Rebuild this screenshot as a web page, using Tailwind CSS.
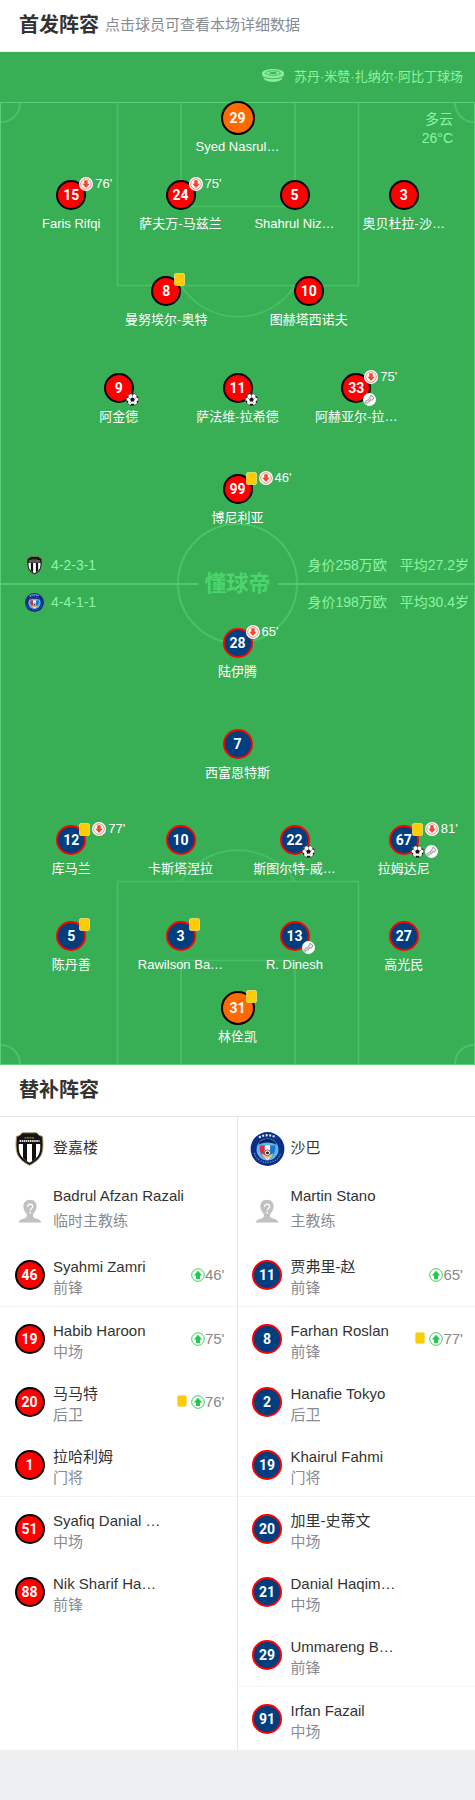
<!DOCTYPE html>
<html lang="zh-CN">

<head>
    <meta charset="UTF-8">
    <meta name="viewport" content="width=device-width, initial-scale=1.0">
    <title>首发阵容</title>
    <script src="https://cdn.jsdelivr.net/npm/@tailwindcss/browser@4"></script>
</head>

<body class="min-h-screen bg-[#eeeff1] text-[#333333] font-['Liberation_Sans','Noto_Sans_CJK_SC',sans-serif]">

    <!-- Shared icons -->
    <svg class="hidden">
        <symbol id="icon-off" viewBox="0 0 14 14">
            <circle cx="7" cy="7" r="7" fill="#fff" />
            <circle cx="7" cy="7" r="5.3" fill="none" stroke="#f2705c" stroke-width=".8" />
            <path d="M5.300 3.200h3.400v3.500h2L7 11 3.300 6.700h2z" fill="#f9452d" />
        </symbol>
        <symbol id="icon-on" viewBox="0 0 14 14">
            <circle cx="7" cy="7" r="6.300" fill="#fff" stroke="#2cc552" stroke-width=".9" />
            <path d="M5 10.900h4V7.400h2.200L7 2.800 2.800 7.400H5z" fill="#1fcb49" />
        </symbol>
        <symbol id="icon-card" viewBox="0 0 11 13">
            <rect x=".5" y=".5" width="10" height="12" rx="1.500" fill="#ffcc00" stroke="#f3dc78" stroke-width=".8" />
        </symbol>
        <symbol id="icon-goal" viewBox="0 0 13 13">
            <circle cx="6.500" cy="6.500" r="6.100" fill="#fff" stroke="#444" stroke-width=".6" />
            <path d="M6.500 4.200l2.300 1.700-.9 2.700H5.100l-.9-2.700z" fill="#111" />
            <path d="M4.500.8L6.500 2l2-1.200A6 6 0 0 0 4.500.8zM.5 5.300l1.900-.9.3-2.200A6 6 0 0 0 .5 5.300zM12.500 5.300l-1.900-.9-.3-2.200a6 6 0 0 1 2.200 3.100zM2 10.400l.3-2.300-1.700-.7A6 6 0 0 0 2 10.400zM11 10.400l-.3-2.300 1.700-.7a6 6 0 0 1-1.400 3zM4.500 12.200l.7-1.500h2.600l.7 1.500a6 6 0 0 1-4 0z" fill="#111" />
            <path d="M6.500 4.200V2M4.200 5.900L2.400 4.400M8.800 5.900l1.800-1.500M5.100 8.600l-.9 1.200M7.900 8.600l.9 1.200" stroke="#555" stroke-width=".5" />
        </symbol>
        <symbol id="icon-assist" viewBox="0 0 13 13">
            <circle cx="6.500" cy="6.500" r="6.500" fill="#fff" />
            <path d="M8 2.200l2.800 2.100-.6 2-2.400 1-3.300 2.500-2.100.5-.6-.9.800-1.300 3-1.500 1.300-2.200z" fill="#e6e6e6" stroke="#777" stroke-width=".7" stroke-linejoin="round" />
            <path d="M6.300 5.300l1.500 1.600M5 6.800l1.300 1.300M3.200 11.200l1-.9M6 9.700l.8-.5M9.500 7.700l.6-.5" stroke="#888" stroke-width=".6" fill="none" />
        </symbol>
        <symbol id="icon-coach" viewBox="0 0 24 24">
            <path d="M12 .8c4.200 0 6.600 2.800 6.600 6.600 0 3.300-1.700 5.600-3.400 7.600-.4 2.600 0 3.700 2.400 4.400 3 .8 5.200 1.400 5.900 4.100H.5c.7-2.700 2.900-3.300 5.900-4.100 2.400-.7 2.800-1.800 2.400-4.400-1.700-2-3.400-4.300-3.400-7.600C5.400 3.600 7.800.8 12 .8z" fill="#c1c1c1" />
            <path d="M9.600 7.900c0-1.800 1-2.700 2.500-2.700s2.500.9 2.500 2.300c0 1.900-2.400 1.900-2.400 4" fill="none" stroke="#fff" stroke-width="1.300" />
            <circle cx="12.200" cy="13.700" r=".9" fill="#fff" />
        </symbol>
        <symbol id="icon-stadium" viewBox="0 0 22 13">
            <path d="M0 4.200C0 1.900 4.900.1 11 .1s11 1.800 11 4.100v1.600c0 2-4.500 3.700-11 3.700S0 7.800 0 5.800z" fill="#8ceb9e" />
            <ellipse cx="11" cy="4" rx="7.300" ry="2.300" fill="none" stroke="#38ae55" stroke-width=".7" />
            <ellipse cx="11" cy="4" rx="3.600" ry=".9" fill="#38ae55" />
            <path d="M7 1.200l1.300 1.200M15 1.200l-1.300 1.200M2.500 4.600h2M17.500 4.600h2M7.500 7l1-1.200M14.500 7l-1-1.200" stroke="#38ae55" stroke-width=".6" />
            <path d="M.9 7.700c4.300 3 15.900 3 20.200 0l-1.300 2.600c-3.600 3.500-14 3.500-17.600 0z" fill="#8ceb9e" />
            <path d="M.7 7.400c4.600 3.200 16 3.200 20.600 0" fill="none" stroke="#38ae55" stroke-width=".6" />
        </symbol>
        <symbol id="crest-home" viewBox="0 0 28 34">
            <path d="M7 .8h14l3 2.700 3 1c.6 7.500 1 13.500-1.600 19C23.200 28 18.500 31 14 33.300 9.500 31 4.800 28 2.600 23.500 0 18 .4 12 1 4.500l3-1z" fill="#141414" stroke="#a8976a" stroke-width="1" />
            <path d="M3.300 12h21.400c.2 4.500-.1 7.700-1.500 10.600-1.700 3.500-5 5.900-9.200 8.100-4.200-2.200-7.500-4.600-9.200-8.100C3.400 19.700 3.100 16.500 3.300 12z" fill="#fff" />
            <path d="M7.500 12h4v17.300c-1.600-1-3-2.100-4-3.300zM16.500 12h4v14c-1 1.200-2.400 2.300-4 3.300z" fill="#111" />
            <path d="M4 9h20" stroke="#ddd" stroke-width="1.800" stroke-dasharray="1.500 .6" />
            <path d="M9 5.800h10" stroke="#a8802c" stroke-width="1.200" stroke-dasharray="2 .5" />
        </symbol>
        <symbol id="crest-away" viewBox="0 0 34 34">
            <circle cx="17" cy="17" r="16.900" fill="#0a2e86" />
            <circle cx="17" cy="17.500" r="11" fill="#5db4ea" />
            <path d="M8 13c3-3.500 15-3.500 18 0-.6-3.500-4.500-6-9-6s-8.400 2.500-9 6z" fill="#0b2358" />
            <path d="M9.300 13.500h5v12c-3-1.700-5-5-5-8.500z" fill="#e8263c" />
            <path d="M14.300 13.500h5.400V26L17 28.300 14.300 26z" fill="#fff" />
            <path d="M19.700 13.500h5V17c0 3.500-2 6.800-5 8.500z" fill="#1b76d1" />
            <path d="M11.500 21.500c2 0 2.500 2.500 5.500 2.500s3.500-2.500 5.500-2.500c-.5 3-2.500 5-5.500 5s-5-2-5.500-5z" fill="#ebc57e" />
            <circle cx="17" cy="20.800" r="3" fill="#fff" stroke="#222" stroke-width=".7" />
            <path d="M17 19.200l1.600 1.200-.6 1.800h-2l-.6-1.800z" fill="#222" />
            <path d="M8.600 5.600C13 2.400 21 2.400 25.400 5.600" fill="none" stroke="#dfe8fa" stroke-width="2.200" stroke-dasharray="2 1.500" />
            <path d="M4 21c2.500 12.500 23.500 12.500 26 0" fill="none" stroke="#8da5d8" stroke-width="1.100" stroke-dasharray="1.200 1.300" />
        </symbol>
    </svg>

    <header class="flex items-center gap-[6px] bg-white h-[52px] px-[19px] pb-px border-b border-[#eaecee]">
        <h1 class="text-xl font-bold">首发阵容</h1>
        <p class="text-[15px] text-[#878c93]">点击球员可查看本场详细数据</p>
    </header>

    <main>
        <section class="bg-[#38ae55]">
            <div class="flex h-[50px] items-center justify-end gap-[10px] pr-3 text-[13px] text-[#8cf5a4]">
                <svg class="w-[22px] h-[13px] mb-1"><use href="#icon-stadium" /></svg>
                <span>苏丹·米赞·扎纳尔·阿比丁球场</span>
            </div>

            <div class="relative text-[13px] text-white">
                <!-- Pitch markings -->
                <div class="absolute inset-0 overflow-hidden border border-[#5bd07a]">
                    <div class="absolute -top-5 -left-5 size-10 rounded-full border-2 border-[#4bc269]"></div>
                    <div class="absolute -top-5 -right-5 size-10 rounded-full border-2 border-[#4bc269]"></div>
                    <div class="absolute -bottom-5 -left-5 size-10 rounded-full border-2 border-[#4bc269]"></div>
                    <div class="absolute -bottom-5 -right-5 size-10 rounded-full border-2 border-[#4bc269]"></div>
                    <svg class="absolute top-0 inset-x-0 mx-auto" width="244" height="217" fill="none" stroke="#49c067" stroke-width="1.700">
                        <path d="M1.500 0V182.500H242.500V0M65 0V103.500H179V0M65 182.500A67.500 67.500 0 0 0 179 182.500" />
                    </svg>
                    <svg class="absolute bottom-0 inset-x-0 mx-auto rotate-180" width="244" height="217" fill="none" stroke="#49c067" stroke-width="1.700">
                        <path d="M1.500 0V182.500H242.500V0M65 0V103.500H179V0M65 182.500A67.500 67.500 0 0 0 179 182.500" />
                    </svg>
                    <div class="absolute inset-0 m-auto size-[121px] rounded-full border-2 border-[#4bc269]"></div>
                    <div class="absolute inset-0 flex items-center">
                        <div class="flex-1 h-[2px] bg-[#52c970]"></div>
                        <div class="w-20 text-center text-[22px] leading-6 font-bold text-[#4bd56d]">懂球帝</div>
                        <div class="flex-1 h-[2px] bg-[#52c970]"></div>
                    </div>
                </div>

                <div class="absolute top-2 right-[22px] text-right text-sm leading-[19px] text-[#8cf5a4]">
                    <p>多云</p>
                    <p>26°C</p>
                </div>

                <div id="home-lineup" class="relative pt-px"></div>

                <div class="relative flex flex-col gap-[15px] pt-[26px] pb-[15px] pl-[25px] pr-[6px] text-sm text-[#8cf5a4]">
                    <div class="flex h-[22px] items-center">
                        <svg class="size-[19px]"><use href="#crest-home" /></svg>
                        <span class="ml-[7px]">4-2-3-1</span>
                        <span class="ml-auto">身价258万欧</span>
                        <span class="ml-[13px]">平均27.2岁</span>
                    </div>
                    <div class="flex h-[22px] items-center">
                        <svg class="size-[19px]"><use href="#crest-away" /></svg>
                        <span class="ml-[7px]">4-4-1-1</span>
                        <span class="ml-auto">身价198万欧</span>
                        <span class="ml-[13px]">平均30.4岁</span>
                    </div>
                </div>

                <div id="away-lineup" class="relative pb-[18px]"></div>
            </div>
        </section>

        <section class="bg-white">
            <div class="flex items-center h-[52px] px-[19px] pb-px border-b border-[#e8e8e8]">
                <h2 class="text-xl font-bold">替补阵容</h2>
            </div>
            <div class="grid grid-cols-2 text-[15px]">
                <div id="home-bench" class="border-r border-[#e8e8e8]"></div>
                <div id="away-bench"></div>
            </div>
        </section>
    </main>

    <script>
        const circleStyles = {
            home: "size-[30px] bg-[#fe0000] border-black",
            away: "size-[30px] bg-[#013e80] border-[#fe0000]",
            keeper: "size-[34px] -m-[2px] bg-[#ff6a00] border-black"
        };

        // Each row: spacing above it, then its players
        const homeRows = [
            { gap: "", players: [{ no: 29, name: "Syed Nasrul…", keeper: true }] },
            { gap: "mt-[23px]", players: [
                { no: 15, name: "Faris Rifqi", off: "76'" },
                { no: 24, name: "萨夫万-马兹兰", off: "75'" },
                { no: 5, name: "Shahrul Niz…" },
                { no: 3, name: "奥贝杜拉-沙…" }
            ] },
            { gap: "mt-[42px]", players: [
                { no: 8, name: "曼努埃尔-奥特", card: true },
                { no: 10, name: "图赫塔西诺夫" }
            ] },
            { gap: "mt-[43px]", players: [
                { no: 9, name: "阿金德", goal: true },
                { no: 11, name: "萨法维-拉希德", goal: true },
                { no: 33, name: "阿赫亚尔-拉…", off: "75'", assist: true }
            ] },
            { gap: "mt-[47px]", players: [{ no: 99, name: "博尼利亚", card: true, off: "46'" }] }
        ];

        const awayRows = [
            { gap: "", players: [{ no: 28, name: "陆伊腾", off: "65'" }] },
            { gap: "mt-[47px]", players: [{ no: 7, name: "西富恩特斯" }] },
            { gap: "mt-[42px]", players: [
                { no: 12, name: "库马兰", card: true, off: "77'" },
                { no: 10, name: "卡斯塔涅拉" },
                { no: 22, name: "斯图尔特-威…", goal: true },
                { no: 67, name: "拉姆达尼", card: true, off: "81'", goal: true, assist: true }
            ] },
            { gap: "mt-[42px]", players: [
                { no: 5, name: "陈丹善", card: true },
                { no: 3, name: "Rawilson Ba…", card: true },
                { no: 13, name: "R. Dinesh", assist: true },
                { no: 27, name: "高光民" }
            ] },
            { gap: "mt-[18px]", players: [{ no: 31, name: "林佺凯", keeper: true, card: true }] }
        ];

        const homeBench = {
            team: "登嘉楼", crest: "crest-home", coach: "Badrul Afzan Razali", role: "临时主教练",
            players: [
                { no: 46, name: "Syahmi Zamri", pos: "前锋", on: "46'" },
                { no: 19, name: "Habib Haroon", pos: "中场", on: "75'" },
                { no: 20, name: "马马特", pos: "后卫", on: "76'", card: true },
                { no: 1, name: "拉哈利姆", pos: "门将" },
                { no: 51, name: "Syafiq Danial …", pos: "中场" },
                { no: 88, name: "Nik Sharif Ha…", pos: "前锋" }
            ]
        };

        const awayBench = {
            team: "沙巴", crest: "crest-away", coach: "Martin Stano", role: "主教练",
            players: [
                { no: 11, name: "贾弗里-赵", pos: "前锋", on: "65'" },
                { no: 8, name: "Farhan Roslan", pos: "前锋", on: "77'", card: true },
                { no: 2, name: "Hanafie Tokyo", pos: "后卫" },
                { no: 19, name: "Khairul Fahmi", pos: "门将" },
                { no: 20, name: "加里-史蒂文", pos: "中场" },
                { no: 21, name: "Danial Haqim…", pos: "中场" },
                { no: 29, name: "Ummareng B…", pos: "前锋" },
                { no: 91, name: "Irfan Fazail", pos: "中场" }
            ]
        };

        function circle(no, style) {
            return `<span class="flex shrink-0 items-center justify-center rounded-full border-2 ${circleStyles[style]} font-[Roboto,sans-serif] text-sm font-bold text-white">${no}</span>`;
        }

        function playerButton(p, side) {
            return `
                <button type="button" class="flex flex-col items-center gap-1 cursor-pointer">
                    <span class="relative size-[30px]">
                        ${circle(p.no, p.keeper ? "keeper" : side)}
                        <span class="absolute left-[23px] -top-[3px] flex items-center whitespace-nowrap leading-[14px]">
                            ${p.card ? `<svg class="w-[11px] h-[13px] mr-[2px]"><use href="#icon-card" /></svg>` : ""}
                            ${p.off ? `<svg class="size-[14px] mr-[2px]"><use href="#icon-off" /></svg>${p.off}` : ""}
                        </span>
                        <span class="absolute left-[22px] -bottom-[3px] flex gap-px">
                            ${p.goal ? `<svg class="size-[13px]"><use href="#icon-goal" /></svg>` : ""}
                            ${p.assist ? `<svg class="size-[13px]"><use href="#icon-assist" /></svg>` : ""}
                        </span>
                    </span>
                    <span class="leading-5 whitespace-nowrap">${p.name}</span>
                </button>`;
        }

        function lineupRow(row, side) {
            const items = row.players.map(p => playerButton(p, side));
            if (items.length === 4) {
                // back fours leave a slightly wider gap down the middle
                return `
                    <div class="${row.gap} flex justify-center gap-[1%]">
                        <div class="grid w-[46%] grid-cols-2">${items[0]}${items[1]}</div>
                        <div class="grid w-[46%] grid-cols-2">${items[2]}${items[3]}</div>
                    </div>`;
            }
            const cols = { 1: "grid-cols-1", 2: "grid-cols-2 px-[20%]", 3: "grid-cols-3 px-[12.5%]" };
            return `<div class="${row.gap} grid ${cols[items.length]}">${items.join("")}</div>`;
        }

        function benchColumn(bench, side) {
            const players = bench.players.map((p, i) => `
                <a href="#" class="flex gap-[6px] pt-[13px] pb-2 px-3 ${i % 3 === 0 ? "border-b border-[#f4f4f4]" : ""}">
                    <span class="flex w-[35px] shrink-0 justify-center pt-1">${circle(p.no, side)}</span>
                    <span class="flex-1 leading-[21px]">
                        <span class="block">${p.name}</span>
                        <span class="block text-[#878c93]">${p.pos}</span>
                    </span>
                    <span class="flex h-[38px] items-center text-[#888888]">
                        ${p.card ? `<svg class="w-[10px] h-3 mr-1 mb-[2px]"><use href="#icon-card" /></svg>` : ""}
                        ${p.on ? `<svg class="size-[14px]"><use href="#icon-on" /></svg>${p.on}` : ""}
                    </span>
                </a>`).join("");

            return `
                <div class="flex items-center gap-[6px] h-[63px] pl-3">
                    <svg class="w-[35px] h-[34px]"><use href="#${bench.crest}" /></svg>
                    <h3>${bench.team}</h3>
                </div>
                <div class="flex gap-[6px] pt-[3px] pb-[10px] pl-3">
                    <span class="flex w-[35px] justify-center pt-4"><svg class="size-6"><use href="#icon-coach" /></svg></span>
                    <div class="leading-[25px]">
                        <p>${bench.coach}</p>
                        <p class="text-[#878c93]">${bench.role}</p>
                    </div>
                </div>
                ${players}`;
        }

        document.getElementById("home-lineup").innerHTML = homeRows.map(r => lineupRow(r, "home")).join("");
        document.getElementById("away-lineup").innerHTML = awayRows.map(r => lineupRow(r, "away")).join("");
        document.getElementById("home-bench").innerHTML = benchColumn(homeBench, "home");
        document.getElementById("away-bench").innerHTML = benchColumn(awayBench, "away");
    </script>

</body>

</html>
